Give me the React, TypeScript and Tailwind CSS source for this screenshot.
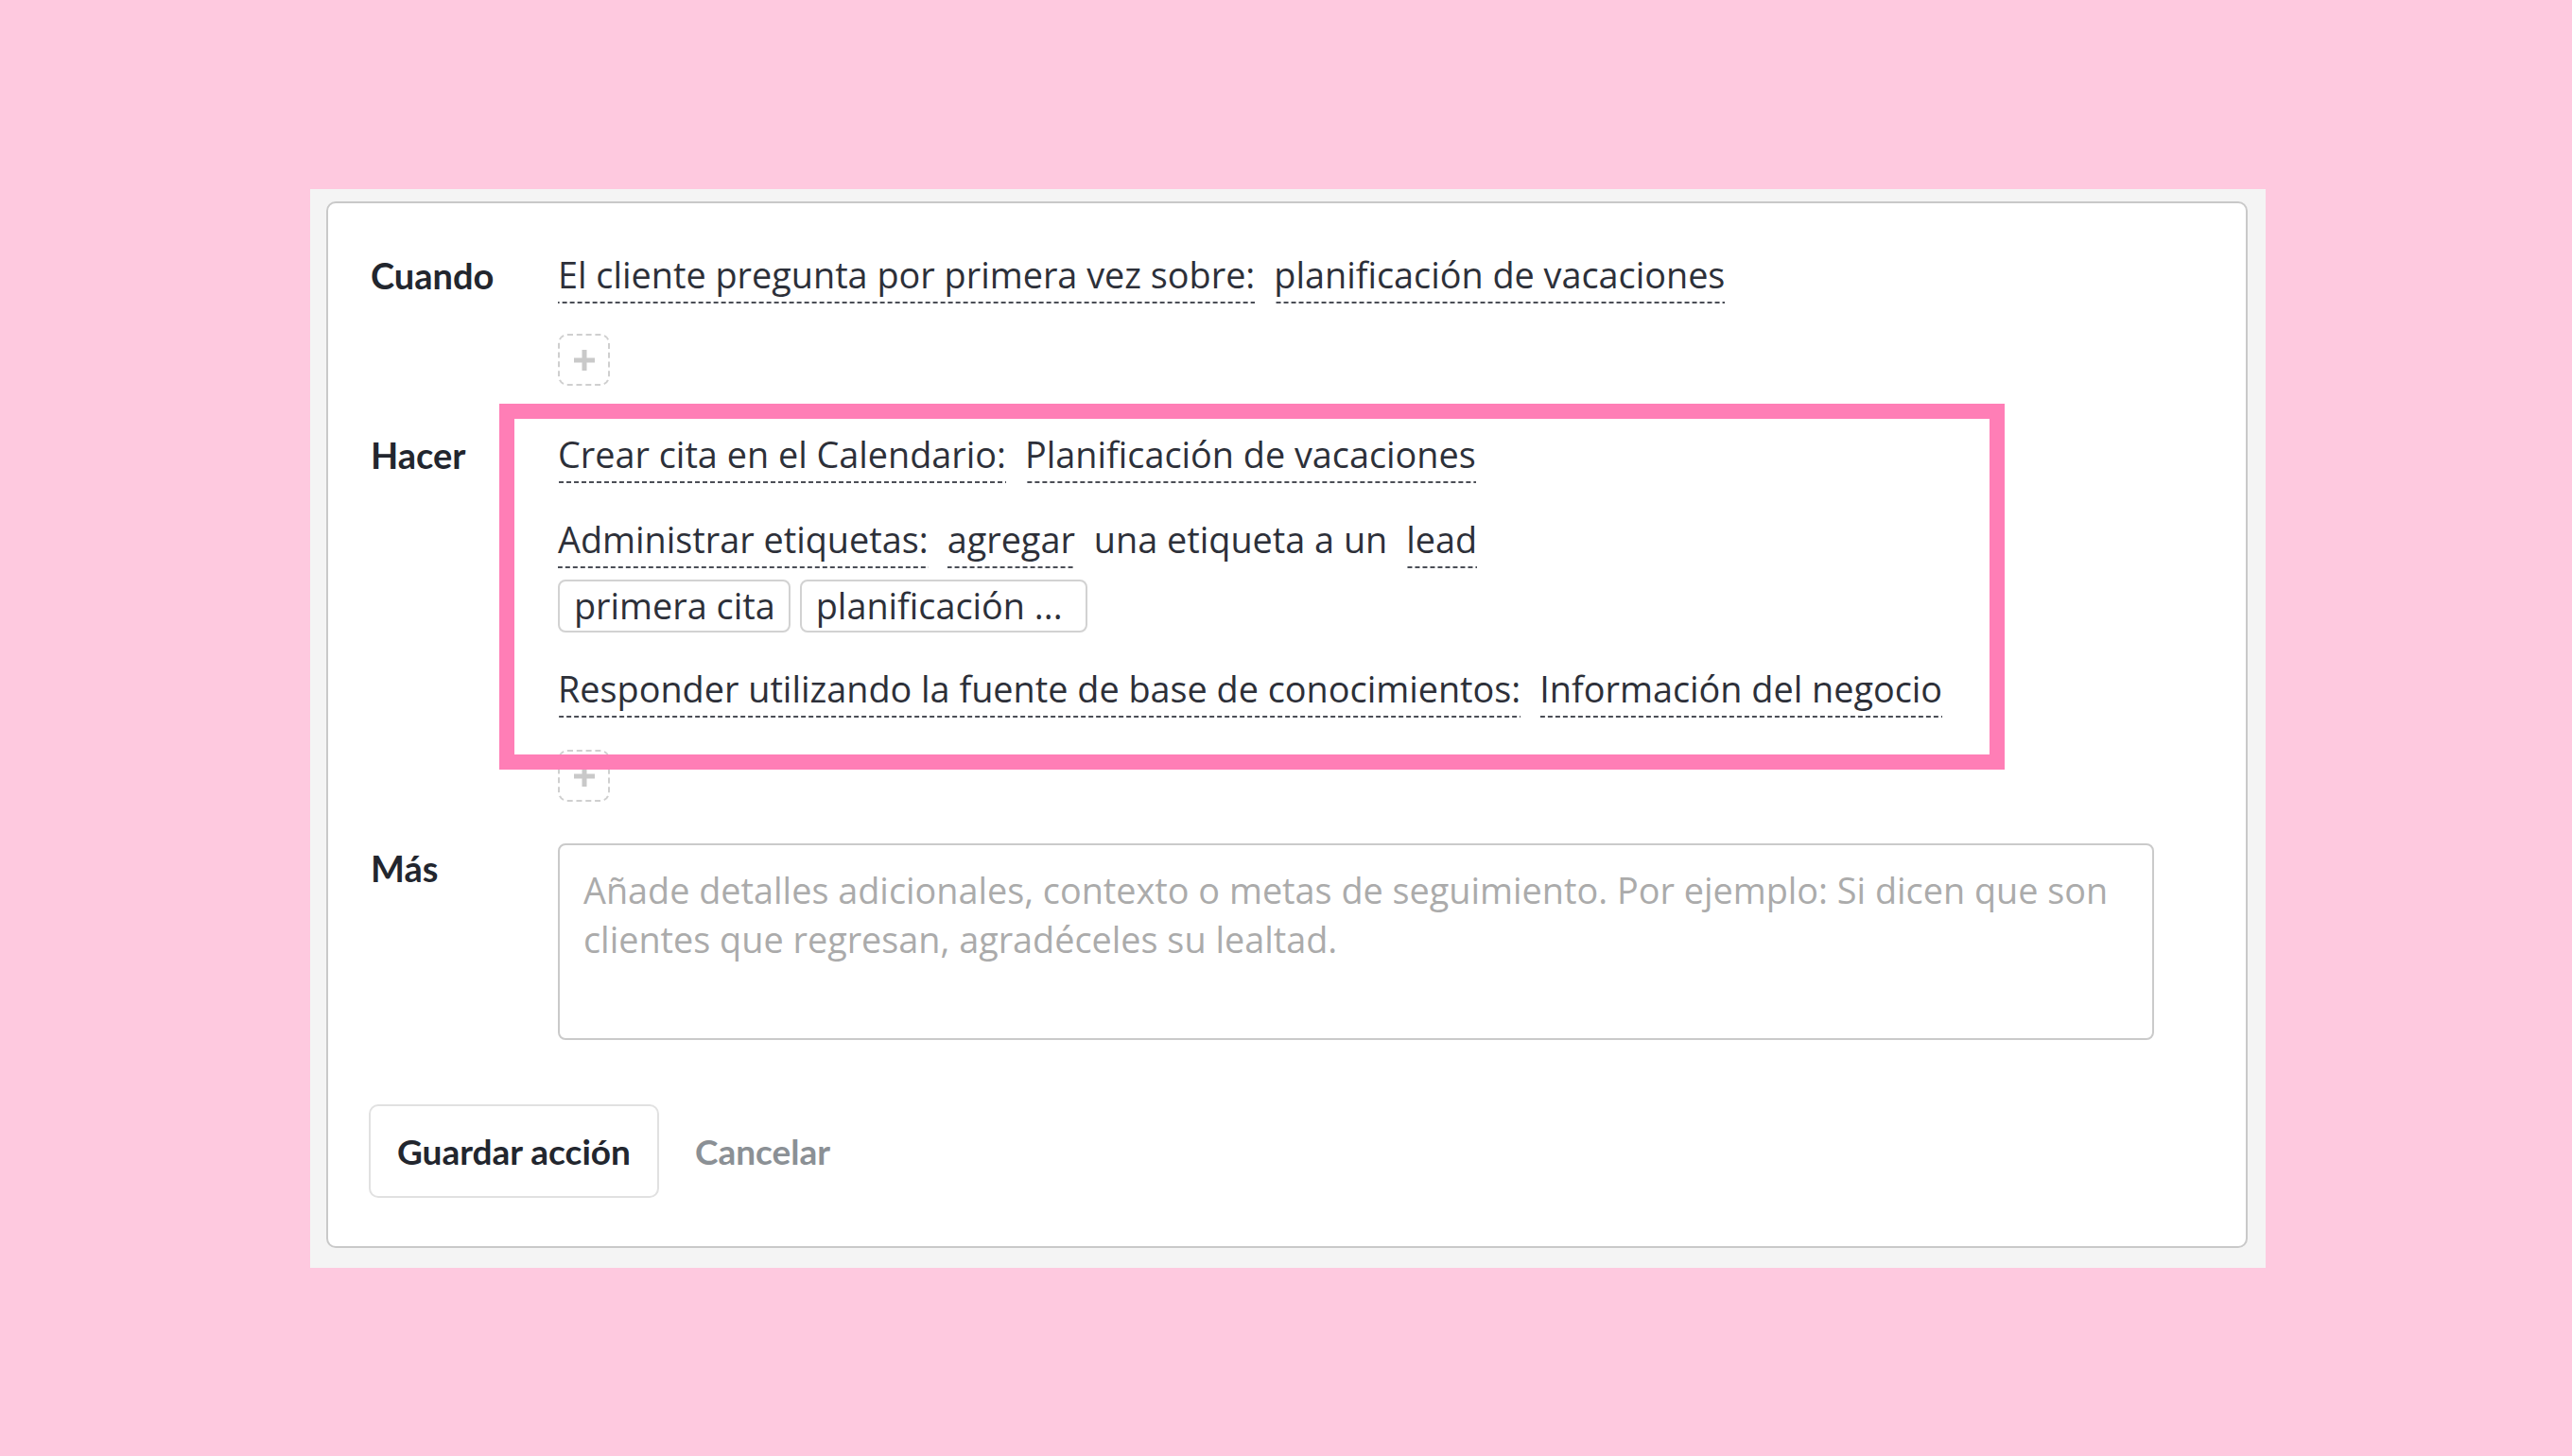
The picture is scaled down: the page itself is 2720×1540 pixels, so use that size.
import type { ReactNode } from 'react';

const body = "font-['Open_Sans',sans-serif] text-[37.8px] text-[#2d3039]";
const label = "w-[198px] shrink-0 font-['Lato',sans-serif] text-[38px] font-bold leading-[40px] text-[#22262e]";
const dashed =
  'inline-block whitespace-nowrap leading-[40px] pb-[10px] bg-[linear-gradient(to_right,#4b4e56_5px,transparent_5px)] bg-[length:8px_2px] bg-repeat-x bg-bottom';
const plain = 'inline-block whitespace-nowrap leading-[40px] pb-[10px]';

function Line({ children }: { children: ReactNode }) {
  return <div className="flex flex-wrap items-start gap-x-[20px]">{children}</div>;
}

function AddButton({ className = '' }: { className?: string }) {
  return (
    <button
      type="button"
      className={`flex h-[55px] w-[55px] items-center justify-center rounded-[10px] border-2 border-dashed border-[#cfcfcf] ${className}`}
    >
      <svg width="22" height="22" viewBox="0 0 22 22">
        <rect x="8.5" y="0" width="5" height="22" fill="#c9c9c9" />
        <rect x="0" y="8.5" width="22" height="5" fill="#c9c9c9" />
      </svg>
    </button>
  );
}

function Chip({ children, className = 'pr-[15px]' }: { children: ReactNode; className?: string }) {
  return (
    <span className={`flex h-[56px] items-center rounded-[8px] border-2 border-[#d2d2d2] pl-[15px] leading-[40px] ${className}`}>
      {children}
    </span>
  );
}

export default function App() {
  return (
    <div className="h-[1540px] w-[2720px] bg-[#fec9df] pl-[328px] pt-[200px]">
      <div className="w-[2068px] bg-[#f4f4f4] pb-[21px] pl-[17px] pr-[19px] pt-[13px]">
        <div className={`rounded-[10px] border-2 border-[#c9c9c9] bg-white pb-[51px] pl-[45px] pt-[56px] ${body}`}>
          {/* Cuando */}
          <div className="flex">
            <div className={label}>Cuando</div>
            <div className="flex flex-col">
              <Line>
                <span className={dashed}>El cliente pregunta por primera vez sobre:</span>
                <span className={dashed}>planificación de vacaciones</span>
              </Line>
              <AddButton className="mt-[32px]" />
            </div>
          </div>

          {/* Hacer */}
          <div className="mt-[53px] flex">
            <div className={label}>Hacer</div>
            <div className="relative flex flex-col">
              <div className="pointer-events-none absolute left-[-62px] top-[-34px] z-10 h-[387px] w-[1592px] border-[16px] border-[#ff7eb6]" />
              <Line>
                <span className={dashed}>Crear cita en el Calendario:</span>
                <span className={dashed}>Planificación de vacaciones</span>
              </Line>
              <div className="mt-[40px]">
                <Line>
                  <span className={dashed}>Administrar etiquetas:</span>
                  <span className={dashed}>agregar</span>
                  <span className={plain}>una etiqueta a un</span>
                  <span className={dashed}>lead</span>
                </Line>
              </div>
              <div className="mt-[12px] flex gap-[10px]">
                <Chip className="pr-[14px]">primera cita</Chip>
                <Chip className="pr-[24px]">planificación ...</Chip>
              </div>
              <div className="mt-[40px]">
                <Line>
                  <span className={dashed}>Responder utilizando la fuente de base de conocimientos:</span>
                  <span className={dashed}>Información del negocio</span>
                </Line>
              </div>
              <AddButton className="mt-[34px]" />
            </div>
          </div>

          {/* Más */}
          <div className="mt-[44px] flex">
            <div className={`${label} mt-[6px]`}>Más</div>
            <textarea
              className="h-[208px] w-[1688px] resize-none rounded-[8px] border-2 border-[#cacaca] pl-[25px] pr-[8px] pt-[22px] leading-[52px] outline-none placeholder:text-[#ababab]"
              placeholder="Añade detalles adicionales, contexto o metas de seguimiento. Por ejemplo: Si dicen que son clientes que regresan, agradéceles su lealtad."
            />
          </div>

          {/* acciones */}
          <div className="mt-[68px] flex items-center gap-[38px] font-['Lato',sans-serif] text-[37px] font-bold">
            <button
              type="button"
              className="ml-[-2px] h-[99px] rounded-[10px] border-2 border-[#e1e1e1] px-[28px] text-[#22262e]"
            >
              Guardar acción
            </button>
            <button type="button" className="text-[#8b9095]">
              Cancelar
            </button>
          </div>
        </div>
      </div>
    </div>
  );
}
